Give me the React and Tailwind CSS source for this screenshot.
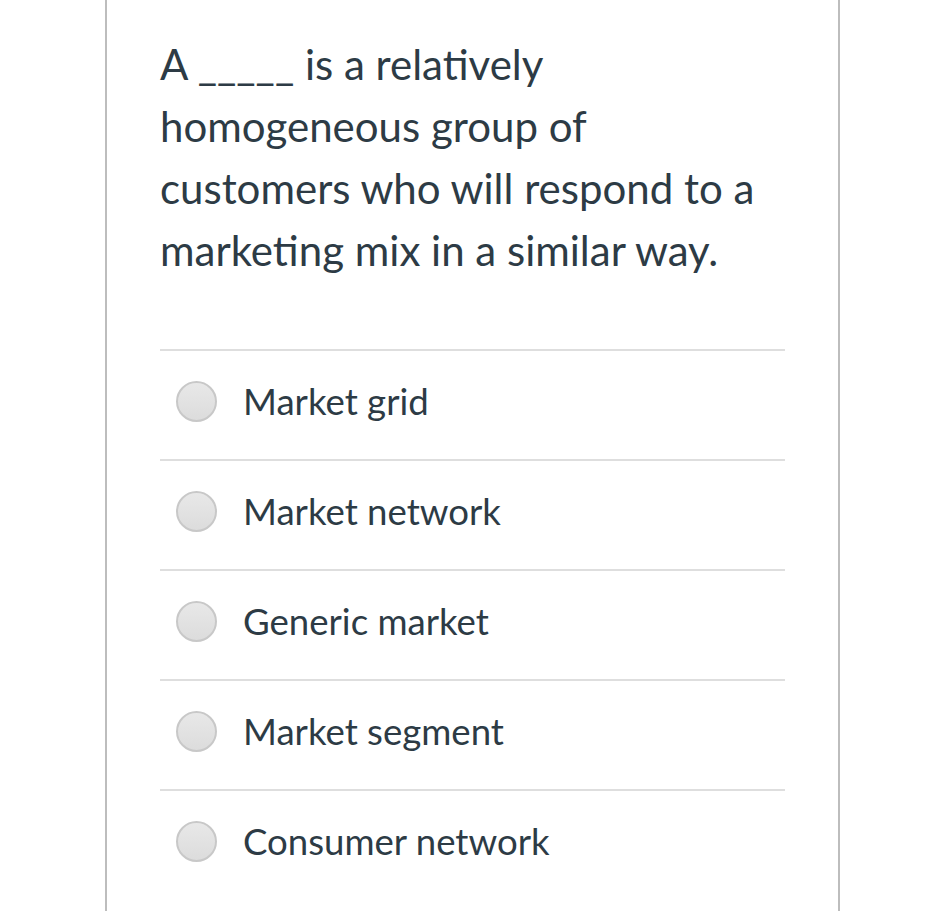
import React from 'react';

const options = ['Market grid', 'Market network', 'Generic market', 'Market segment', 'Consumer network'];

function Radio() {
  return (
    <span className="w-[41px] h-[41px] rounded-full border-2 border-[#c8c8c8] bg-gradient-to-b from-[#e8e8e8] to-[#dcdcdc] shrink-0" />
  );
}

export default function App() {
  return (
    <div className="w-[946px] h-[911px] bg-white overflow-hidden font-['Lato','Open_Sans',sans-serif] text-[#2d3b45]">
      <div className="ml-[105px] w-[735px] h-[911px] border-x-2 border-[#bdbdbd] px-[53px] pt-[33px]">
        <p className="text-[42px] leading-[62px] w-[610px]">
          A _____ is a relatively homogeneous group of customers who will respond to a marketing mix in a similar way.
        </p>
        <div className="mt-[68px]">
          {options.map((o) => (
            <div key={o} className="h-[110px] border-t-2 border-[#dedede] flex items-center pl-[16px] gap-[26px] pb-[8px]">
              <Radio />
              <span className="text-[36.6px] leading-none">{o}</span>
            </div>
          ))}
        </div>
      </div>
    </div>
  );
}
